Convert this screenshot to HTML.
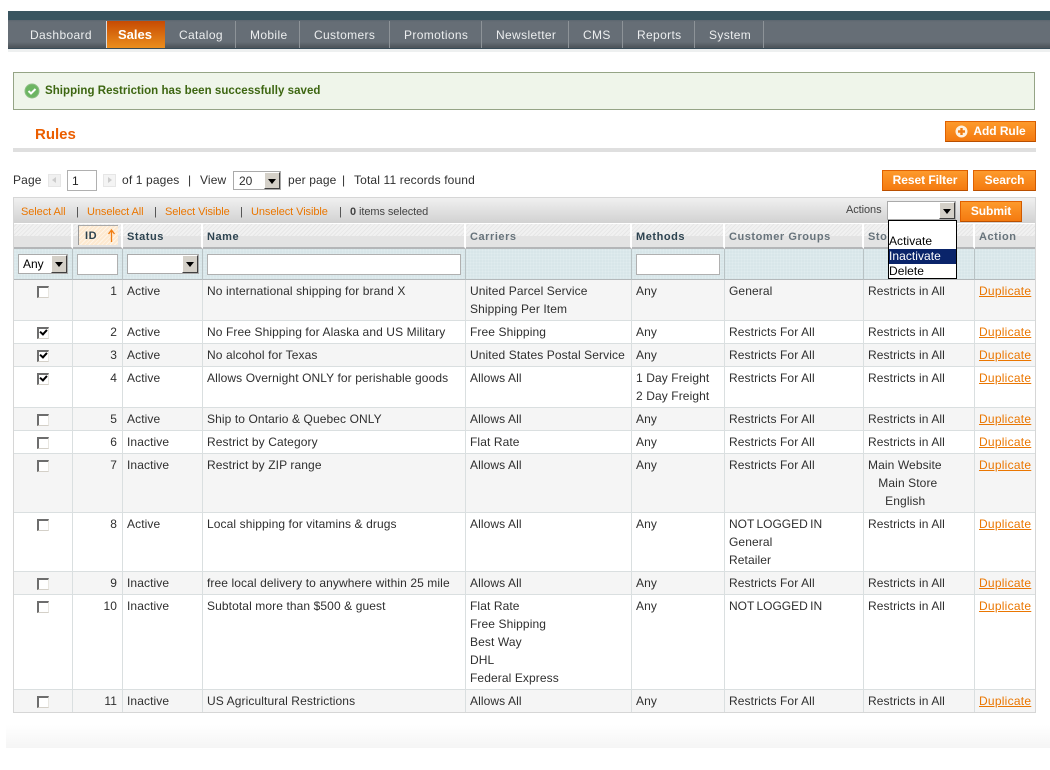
<!DOCTYPE html>
<html><head><meta charset="utf-8"><style>
html,body{margin:0;padding:0;background:#fff}
body{width:1050px;height:770px;position:relative;overflow:hidden;font:12px/18px "Liberation Sans",Arial,sans-serif;color:#2f2f2f;letter-spacing:.1px}
.a{position:absolute;white-space:nowrap}
#top{left:8px;top:11px;width:1042px;height:9px;background:#3a5560}
#nav{left:8px;top:20px;width:1042px;height:28px;background:linear-gradient(#5b6670 0,#666e76 2px,#666e76 22px,#4f565c 27px);border-bottom:1px solid #384c58}
#navb{left:8px;top:49px;width:1042px;height:3px;background:#eef0f0}
.n{top:26px;color:#eceeef;text-align:center;letter-spacing:.36px}
.s{left:762px;top:21px;width:1px;height:27px;background:#8d9398}
#sales{left:106px;top:21px;width:59px;height:27px;background:linear-gradient(#c74b03,#eb8e1d);border-left:1px solid #ddd;box-sizing:border-box;color:#fff;font-weight:bold;font-size:13px;text-align:center;line-height:27px;letter-spacing:0;padding-right:2px}
#msg{left:13px;top:72px;width:1020px;height:36px;background:#eff5ea;border:1px solid #95a486}
#msgt{left:45px;top:82px;color:#3d6611;font-weight:bold;font-size:11.5px;letter-spacing:.04px}
#h3{left:35px;top:127px;color:#eb5e00;font-weight:bold;font-size:15px;letter-spacing:0;line-height:16px}
#rule{left:13px;top:148px;width:1023px;height:4px;background:#dfdfdf}
.b{background:linear-gradient(#fd9a2c,#f47a10);border:1px solid #e06100;border-bottom-color:#b94f00;border-right-color:#d05a00;box-sizing:border-box;color:#fff;font-weight:bold;text-align:center;letter-spacing:-.05px}
.inp{background:#fff;border:1px solid #b0b0b0;box-sizing:border-box}
.sel{background:#fff;border:1px solid #aaa;box-sizing:border-box;letter-spacing:0;padding-left:5px}
.arr{position:absolute;right:0;top:0;bottom:0;width:16px;background:#d4d0c8;border-right:1px solid #404040;border-bottom:1px solid #404040;border-left:1px solid #fff;border-top:1px solid #fff;box-sizing:border-box}
.arr:after{content:"";position:absolute;left:3px;top:6px;border:4px solid transparent;border-top:5px solid #000;border-bottom:0}
#mass{left:13px;top:197px;width:1021px;height:26px;background:linear-gradient(#f0f0f0,#d0d0d0);border:1px solid #d6d6d6;border-bottom:0;font-size:11px;letter-spacing:-.08px;color:#444}
.o{color:#ea7601}
.t{letter-spacing:.14px}
table{position:absolute;left:13px;top:223px;border-collapse:separate;border-spacing:0;table-layout:fixed;width:1023px;border-left:1px solid #d6d6d6;border-right:1px solid #d6d6d6;border-bottom:1px solid #d6d6d6;box-sizing:border-box}
td,th{box-sizing:border-box;padding:2px 4px 0;vertical-align:top;border-right:1px solid #dadfe0;border-bottom:1px solid #dadfe0;text-align:left;font-weight:normal;overflow:hidden;white-space:nowrap}
td:last-child,th:last-child{border-right:0}
tr:last-child td{border-bottom:0}
tr.g td{background:#f5f5f5}
th{height:26px;padding-top:4px;line-height:18px;background:linear-gradient(#fff 0,#fff 1px,transparent 1px),linear-gradient(transparent 13px,#e3e3e3 13px),repeating-linear-gradient(135deg,#f1f1f1 0 2px,#e6e6e6 2px 3px);color:#67737b;font-weight:bold;font-size:11px;letter-spacing:.55px;border-right:2px solid #fff;border-bottom:2px solid #b4b6b8}
th.d{color:#2d4350}
tr.f td{height:31px;background:#d8e6e9;background-image:radial-gradient(#e0ecee 1px,transparent 1px);background-size:3px 3px;border-right-color:#b9c3c5;border-bottom:1px solid #b4b8ba}
td.r{text-align:right;padding-right:5px}
.cb{display:block;width:12px;height:12px;box-sizing:border-box;border:2px solid #6d6d6d;border-right:1px solid #e8e6e0;border-bottom:1px solid #d4d0c8;background:#fff;margin:6px auto 0 23px;position:relative}
.cb.c:after{content:"";position:absolute;left:1px;top:0;width:5px;height:3px;border-left:2px solid #000;border-bottom:2px solid #000;transform:rotate(-48deg)}
td.cbc{padding:0}
a{color:#ea7601;text-decoration:underline;letter-spacing:.25px}
.nl{letter-spacing:0;word-spacing:-1px}
#pop{left:888px;top:220px;width:69px;height:59px;background:#fff;border:1px solid #000;box-sizing:border-box;color:#000;letter-spacing:.05px;line-height:15px;padding-top:13px}
#pop div{padding-left:0;height:15px}
#pop .on{background:#0a246a;color:#fff}
#foot{left:6px;top:725px;width:1044px;height:23px;background:linear-gradient(#fff,#f5f5f5)}
</style></head><body>
<div class="a" id="top"></div><div class="a" id="nav"></div><div class="a" id="navb"></div>
<div class="a n" style="left:30px">Dashboard</div>
<div class="a" id="sales">Sales</div>
<div class="a n" style="left:179px">Catalog</div><div class="a s" style="left:235px"></div>
<div class="a n" style="left:250px">Mobile</div><div class="a s" style="left:299px"></div>
<div class="a n" style="left:314px">Customers</div><div class="a s" style="left:389px"></div>
<div class="a n" style="left:404px">Promotions</div><div class="a s" style="left:481px"></div>
<div class="a n" style="left:496px">Newsletter</div><div class="a s" style="left:568px"></div>
<div class="a n" style="left:583px">CMS</div><div class="a s" style="left:622px"></div>
<div class="a n" style="left:637px">Reports</div><div class="a s" style="left:694px"></div>
<div class="a n" style="left:709px">System</div><div class="a s" style="left:763px"></div>

<div class="a" id="msg"></div>
<svg class="a" style="left:24px;top:83px" width="16" height="16" viewBox="0 0 16 16"><circle cx="8" cy="8" r="7" fill="#6cb562" stroke="#8fbf86"/><path d="M4.500 8l2.500 2.500 4.500-4.500" fill="none" stroke="#fff" stroke-width="2"/></svg>
<div class="a" id="msgt">Shipping Restriction has been successfully saved</div>
<div class="a" id="h3">Rules</div>
<div class="a b" style="left:945px;top:121px;width:91px;height:21px;line-height:18px;padding-left:18px">Add Rule</div>
<svg class="a" style="left:955px;top:125px" width="13" height="13" viewBox="0 0 13 13"><circle cx="6.500" cy="6.500" r="6" fill="#fdf1e0"/><path d="M6.500 3v7M3 6.500h7" stroke="#f07c10" stroke-width="2.400"/></svg>
<div class="a" id="rule"></div>

<div class="a t" style="left:13px;top:171px">Page</div>
<div class="a" style="left:48px;top:174px;width:13px;height:13px;background:#f0f0f0;border:1px solid #e6e6e6;box-sizing:border-box"></div>
<div class="a" style="left:52px;top:177px;border:3.500px solid transparent;border-right:4px solid #ccc;border-left:0"></div>
<div class="a inp" style="left:67px;top:170px;width:30px;height:21px;padding-left:4px;letter-spacing:0;line-height:21px;color:#222">1</div>
<div class="a" style="left:103px;top:174px;width:13px;height:13px;background:#f4f4f4;border:1px solid #e6e6e6;box-sizing:border-box"></div>
<div class="a" style="left:108px;top:177px;border:3.500px solid transparent;border-left:4px solid #ccc;border-right:0"></div>
<div class="a t" style="left:122px;top:171px">of 1 pages</div>
<div class="a" style="left:188px;top:171px">|</div>
<div class="a t" style="left:200px;top:171px">View</div>
<div class="a sel" style="left:233px;top:171px;width:48px;height:19px;line-height:18px">20<span class="arr"></span></div>
<div class="a t" style="left:288px;top:171px">per page</div>
<div class="a" style="left:342px;top:171px">|</div>
<div class="a t" style="left:354px;top:171px">Total 11 records found</div>
<div class="a b" style="left:882px;top:170px;width:86px;height:21px;line-height:18px">Reset Filter</div>
<div class="a b" style="left:973px;top:170px;width:63px;height:21px;line-height:18px">Search</div>

<div class="a" id="mass">
<span class="a o" style="left:7px;top:5px">Select All</span><span class="a" style="left:62px;top:5px">|</span>
<span class="a o" style="left:73px;top:5px">Unselect All</span><span class="a" style="left:140px;top:5px">|</span>
<span class="a o" style="left:151px;top:5px">Select Visible</span><span class="a" style="left:226px;top:5px">|</span>
<span class="a o" style="left:237px;top:5px">Unselect Visible</span><span class="a" style="left:325px;top:5px">|</span>
<span class="a" style="left:336px;top:5px"><b>0</b> items selected</span>
<span class="a" style="left:832px;top:3px">Actions</span>
</div>

<table>
<colgroup><col style="width:59px"><col style="width:50px"><col style="width:80px"><col style="width:263px"><col style="width:166px"><col style="width:93px"><col style="width:139px"><col style="width:111px"><col></colgroup>
<tr style="height:26px"><th></th><th class="d" style="padding:2px 3px 0 5px"><div style="height:20px;box-sizing:border-box;line-height:21px;padding-left:6px;border-left:1px solid #9a9a9a;border-top:1px solid #aaa;background:repeating-linear-gradient(135deg,#fde9d0 0 2px,#fff5e8 2px 3px);position:relative">ID<svg style="position:absolute;left:28px;top:3px" width="9" height="13" viewBox="0 0 9 13"><path d="M4.500 1v12M1.500 5l3-4 3 4" fill="none" stroke="#f07c10" stroke-width="1.300"/></svg></div></th><th class="d" style="padding-top:5px">Status</th><th class="d" style="padding-top:5px">Name</th><th style="padding-top:5px">Carriers</th><th class="d" style="padding-top:5px">Methods</th><th style="padding-top:5px">Customer Groups</th><th style="padding-top:5px">Store</th><th style="padding-top:5px">Action</th></tr>
<tr class="f"><td style="padding:5px 0 0 4px"><div class="sel" style="position:relative;width:50px;height:20px;line-height:18px;padding-left:4px;color:#000">Any<span class="arr"></span></div></td><td style="padding:5px 0 0 4px"><div class="inp" style="width:41px;height:21px"></div></td><td style="padding:5px 0 0 4px"><div class="sel" style="position:relative;width:72px;height:20px"><span class="arr"></span></div></td><td style="padding:5px 0 0 4px"><div class="inp" style="width:254px;height:21px"></div></td><td></td><td style="padding:5px 0 0 4px"><div class="inp" style="width:84px;height:21px"></div></td><td></td><td></td><td></td></tr>
<tr class="g" style="height:41px"><td class="cbc"><i class="cb"></i></td><td class="r">1</td><td>Active</td><td>No international shipping for brand X</td><td>United Parcel Service<br>Shipping Per Item</td><td>Any</td><td>General</td><td>Restricts in All</td><td><a>Duplicate</a></td></tr>
<tr style="height:23px"><td class="cbc"><i class="cb c"></i></td><td class="r">2</td><td>Active</td><td>No Free Shipping for Alaska and US Military</td><td>Free Shipping</td><td>Any</td><td>Restricts For All</td><td>Restricts in All</td><td><a>Duplicate</a></td></tr>
<tr class="g" style="height:23px"><td class="cbc"><i class="cb c"></i></td><td class="r">3</td><td>Active</td><td>No alcohol for Texas</td><td>United States Postal Service</td><td>Any</td><td>Restricts For All</td><td>Restricts in All</td><td><a>Duplicate</a></td></tr>
<tr style="height:41px"><td class="cbc"><i class="cb c"></i></td><td class="r">4</td><td>Active</td><td>Allows Overnight ONLY for perishable goods</td><td>Allows All</td><td>1 Day Freight<br>2 Day Freight</td><td>Restricts For All</td><td>Restricts in All</td><td><a>Duplicate</a></td></tr>
<tr class="g" style="height:23px"><td class="cbc"><i class="cb"></i></td><td class="r">5</td><td>Active</td><td>Ship to Ontario &amp; Quebec ONLY</td><td>Allows All</td><td>Any</td><td>Restricts For All</td><td>Restricts in All</td><td><a>Duplicate</a></td></tr>
<tr style="height:23px"><td class="cbc"><i class="cb"></i></td><td class="r">6</td><td>Inactive</td><td>Restrict by Category</td><td>Flat Rate</td><td>Any</td><td>Restricts For All</td><td>Restricts in All</td><td><a>Duplicate</a></td></tr>
<tr class="g" style="height:59px"><td class="cbc"><i class="cb"></i></td><td class="r">7</td><td>Inactive</td><td>Restrict by ZIP range</td><td>Allows All</td><td>Any</td><td>Restricts For All</td><td>Main Website<br>&nbsp;&nbsp;&nbsp;Main Store<br>&nbsp;&nbsp;&nbsp;&nbsp;&nbsp;English</td><td><a>Duplicate</a></td></tr>
<tr style="height:59px"><td class="cbc"><i class="cb"></i></td><td class="r">8</td><td>Active</td><td>Local shipping for vitamins &amp; drugs</td><td>Allows All</td><td>Any</td><td><span class="nl">NOT LOGGED IN</span><br>General<br>Retailer</td><td>Restricts in All</td><td><a>Duplicate</a></td></tr>
<tr class="g" style="height:23px"><td class="cbc"><i class="cb"></i></td><td class="r">9</td><td>Inactive</td><td>free local delivery to anywhere within 25 mile</td><td>Allows All</td><td>Any</td><td>Restricts For All</td><td>Restricts in All</td><td><a>Duplicate</a></td></tr>
<tr style="height:95px"><td class="cbc"><i class="cb"></i></td><td class="r">10</td><td>Inactive</td><td>Subtotal more than $500 &amp; guest</td><td>Flat Rate<br>Free Shipping<br>Best Way<br>DHL<br>Federal Express</td><td>Any</td><td><span class="nl">NOT LOGGED IN</span></td><td>Restricts in All</td><td><a>Duplicate</a></td></tr>
<tr class="g" style="height:22px"><td class="cbc"><i class="cb"></i></td><td class="r">11</td><td>Inactive</td><td>US Agricultural Restrictions</td><td>Allows All</td><td>Any</td><td>Restricts For All</td><td>Restricts in All</td><td><a>Duplicate</a></td></tr>
</table>

<div class="a sel" style="left:887px;top:201px;width:69px;height:19px"><span class="arr"></span></div>
<div class="a b" style="left:960px;top:201px;width:62px;height:21px;line-height:18px">Submit</div>
<div class="a" id="pop"><div>Activate</div><div class="on">Inactivate</div><div>Delete</div></div>
<div class="a" id="foot"></div>
</body></html>
